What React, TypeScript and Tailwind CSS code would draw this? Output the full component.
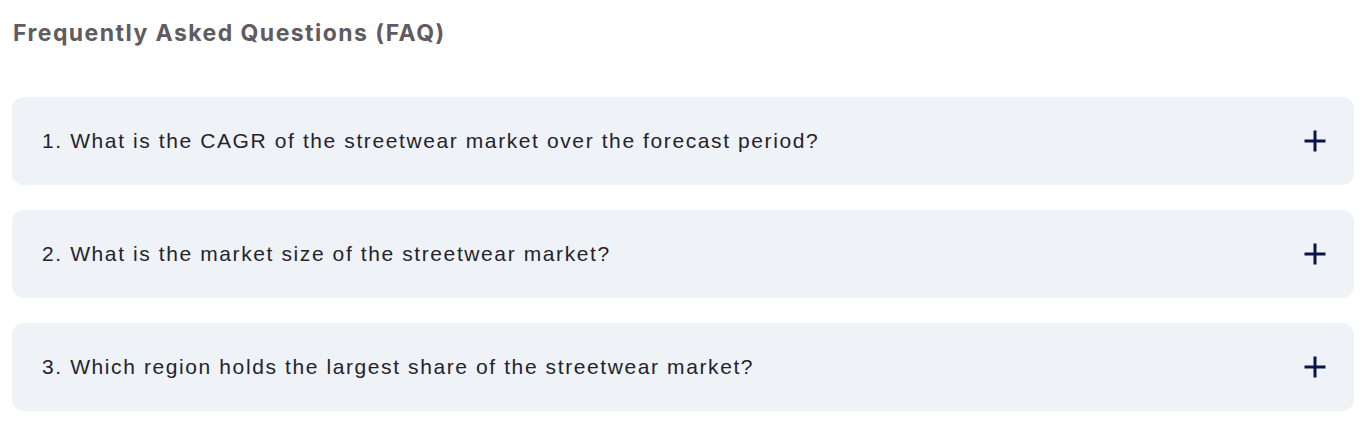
const faqs = [
  "1. What is the CAGR of the streetwear market over the forecast period?",
  "2. What is the market size of the streetwear market?",
  "3. Which region holds the largest share of the streetwear market?",
];

function PlusIcon() {
  return (
    <svg width="24" height="24" viewBox="0 0 24 24" className="shrink-0">
      <path d="M12 1.5v21M1.5 12h21" stroke="#0b1446" strokeWidth="3" />
    </svg>
  );
}

export default function App() {
  return (
    <div className="bg-white w-full px-3 pt-[17px] pb-4 font-['Liberation_Sans',Arial,sans-serif]">
      <h2 className="text-[23px] leading-8 font-bold text-[#5f5b60] tracking-[1.45px] font-['Inter',sans-serif] pl-px">
        Frequently Asked Questions (FAQ)
      </h2>
      <div className="mt-[48px] flex flex-col gap-[25px]">
        {faqs.map((q) => (
          <div
            key={q}
            className="h-[88px] rounded-xl bg-[#eff2f7] flex items-center justify-between pl-[30px] pr-[27px]"
          >
            <span className="text-[21px] text-[#24242c] tracking-[1.6px]">{q}</span>
            <PlusIcon />
          </div>
        ))}
      </div>
    </div>
  );
}
